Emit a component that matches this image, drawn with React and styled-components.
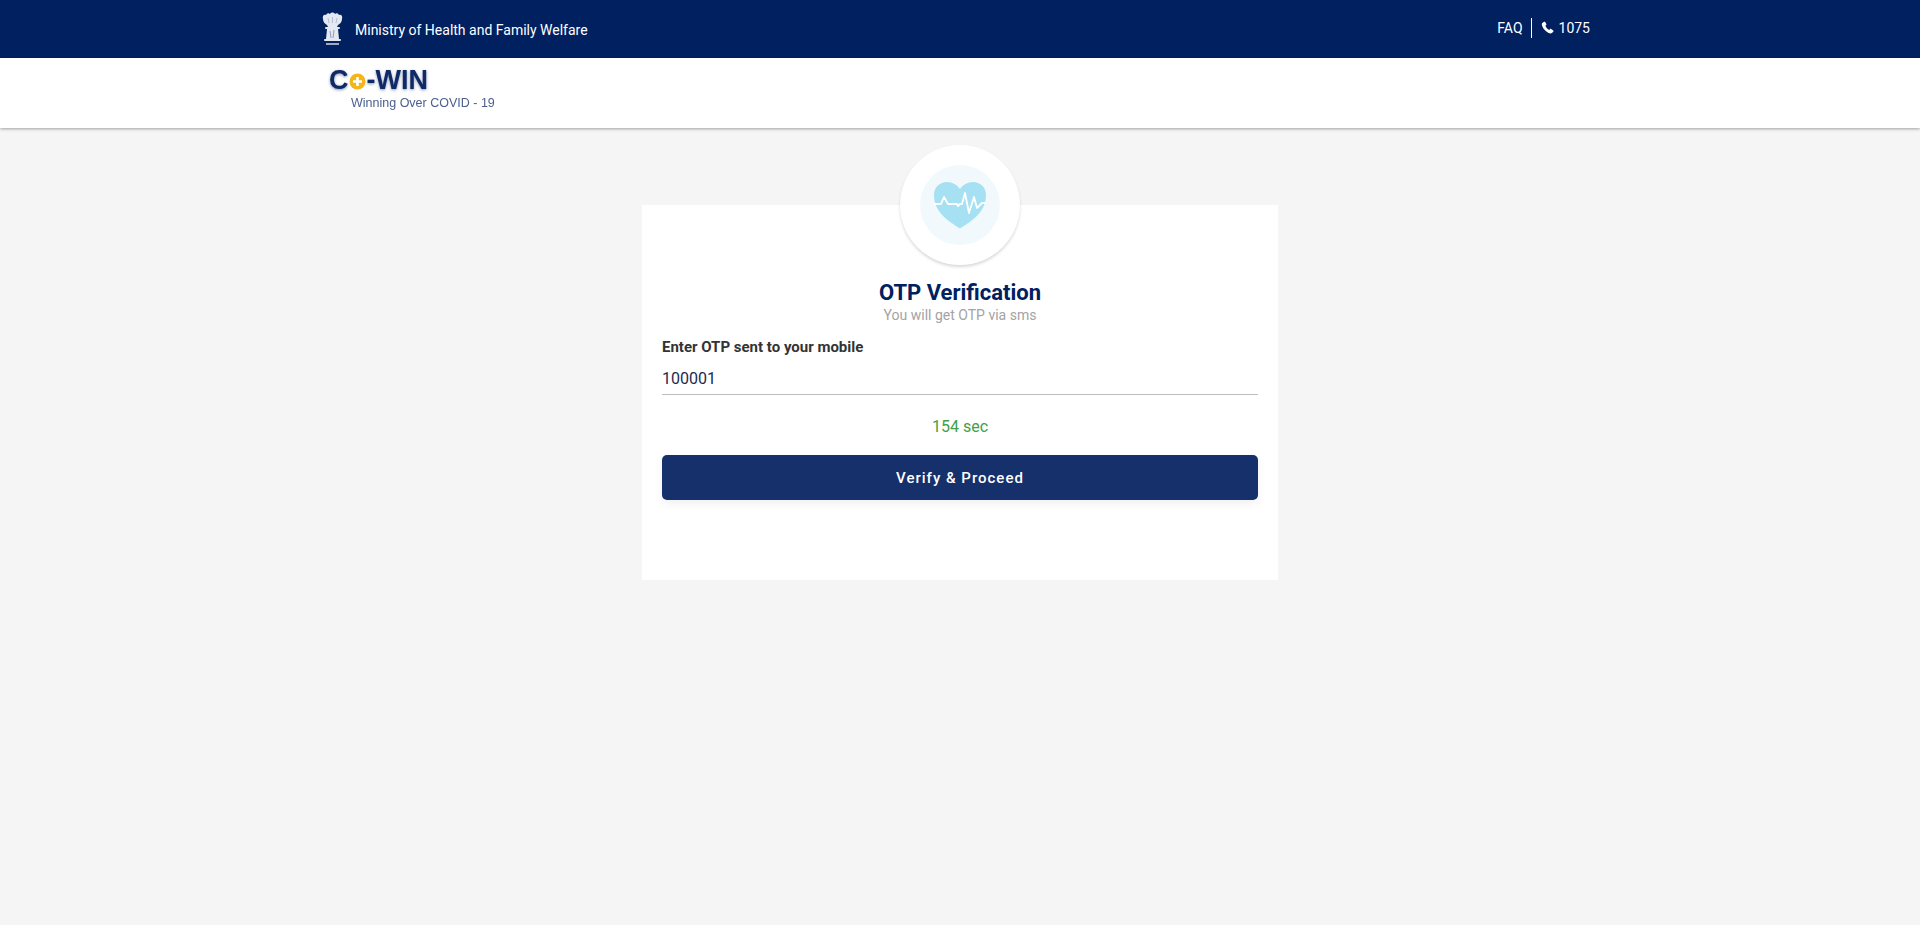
import React from 'react';
import styled, { createGlobalStyle } from 'styled-components';

const GlobalStyle = createGlobalStyle`
  html, body {
    margin: 0;
    padding: 0;
    min-height: 925px;
    background-color: #f5f5f5;
    font-family: Roboto, "Liberation Sans", sans-serif;
  }
  * { box-sizing: border-box; }
`;

const TopBar = styled.header`
  height: 58px;
  background-color: #002060;
  color: #fff;
`;

const Wrap = styled.div`
  width: 1280px;
  height: 100%;
  margin: 0 auto;
  display: flex;
  align-items: center;
  justify-content: space-between;
`;

const Ministry = styled.div`
  display: flex;
  align-items: center;
  gap: 11px;
  font-size: 14px;
  padding-top: 1px;
`;

const TopLinks = styled.div`
  display: flex;
  align-items: center;
  font-size: 14px;
  margin-top: -3px;
  padding-right: 10px;
`;

const Faq = styled.span`
  padding-right: 8px;
  border-right: 1px solid #fff;
  line-height: 20px;
`;

const Phone = styled.span`
  display: flex;
  align-items: center;
  gap: 5px;
  padding-left: 9px;
`;

const LogoBar = styled.div`
  height: 70px;
  background-color: #fff;
  box-shadow: 0 1px 3px rgba(0, 0, 0, 0.35);
`;

const Logo = styled.div`
  width: 1280px;
  margin: 0 auto;
  padding: 7px 0 0 9px;
  color: #0f2a66;
  filter: blur(0.4px);
`;

const LogoName = styled.div`
  display: flex;
  align-items: center;
  height: 30px;
  font-family: "Liberation Sans", sans-serif;
  font-size: 27px;
  font-weight: 700;
  text-shadow: 0 1px 3px rgba(15, 42, 102, 0.5);
`;

const LogoTag = styled.div`
  margin: 1px 0 0 22px;
  font-family: "Liberation Sans", sans-serif;
  font-size: 12.5px;
  line-height: 14px;
  color: #4a5f8f;
`;

const Main = styled.main`
  display: flex;
  justify-content: center;
  padding-top: 77px;
`;

const Card = styled.section`
  position: relative;
  width: 636px;
  height: 375px;
  padding: 74px 20px 0;
  background-color: #fff;
`;

const Badge = styled.div`
  position: absolute;
  top: -60px;
  left: 258px;
  width: 120px;
  height: 120px;
  border-radius: 50%;
  background-color: #fff;
  box-shadow: 0 2px 3px rgba(0, 0, 0, 0.15);
  display: flex;
  align-items: center;
  justify-content: center;
`;

const BadgeInner = styled.div`
  width: 80px;
  height: 80px;
  border-radius: 50%;
  background-color: #f1f9fd;
  display: flex;
  align-items: center;
  justify-content: center;
`;

const Title = styled.h1`
  margin: 0;
  font-size: 22px;
  line-height: 28px;
  font-weight: 700;
  text-align: center;
  color: #002060;
`;

const Subtitle = styled.p`
  margin: 0 0 14px;
  font-size: 14px;
  line-height: 16px;
  text-align: center;
  color: #a3a3a3;
`;

const Label = styled.label`
  display: block;
  font-size: 15px;
  line-height: 20px;
  font-weight: 700;
  color: #333;
`;

const OtpInput = styled.input`
  display: block;
  width: 100%;
  height: 32px;
  margin-top: 6px;
  padding: 0;
  border: 0;
  border-bottom: 1px solid #bdbdbd;
  outline: 0;
  background: transparent;
  font-family: inherit;
  font-size: 16px;
  color: #1d2b50;
`;

const Timer = styled.div`
  margin-top: 22px;
  font-size: 16px;
  line-height: 20px;
  text-align: center;
  color: #43a047;
`;

const Button = styled.button`
  display: block;
  width: 100%;
  height: 45px;
  margin-top: 18px;
  border: 0;
  border-radius: 5px;
  background-color: #15306b;
  box-shadow: 0 4px 10px rgba(0, 0, 0, 0.06);
  color: #fff;
  font-family: inherit;
  font-size: 15px;
  font-weight: 500;
  letter-spacing: 1px;
`;

const EmblemSvg = styled.svg`
  filter: blur(0.5px);
  margin-left: 1px;
`;

const Emblem = () => (
  <EmblemSvg width="23" height="35" viewBox="0 0 23 35">
    <g fill="#e4e8f1">
      <path d="M2 7 C1 4 3 2 5 3 C6 1 8 1 9 2 C10 0 13 0 14 2 C15 1 17 1 18 3 C20 2 22 4 21 7 C21 10 19 12 17 13 L16 15 L7 15 L6 13 C4 12 2 10 2 7Z" />
      <rect x="4" y="15" width="15" height="2" rx="1" />
      <path d="M6 17 L17 17 L18 27 L5 27Z" />
      <rect x="3" y="27" width="17" height="2" rx="1" />
    </g>
    <rect x="5" y="31" width="13" height="2" fill="#9fabc6" />
    <path d="M9 19 L10 26 M13 18 L12 26" stroke="#8f9cbb" strokeWidth="1" />
    <path d="M7 6 L8 11 M11.5 5 L11.5 11 M16 6 L15 11" stroke="#b3bdd3" strokeWidth="1" />
  </EmblemSvg>
);

const PhoneIcon = () => (
  <svg width="13" height="13" viewBox="0 0 13 13">
    <path
      d="M3.1 0.8 L1.3 2 C0.6 2.6 0.7 4 1.5 5.8 C2.7 8.4 4.9 10.7 7.6 12 C9 12.6 10.3 12.7 11 12 L12.4 10.5 C12.7 10.1 12.6 9.7 12.2 9.4 L10.2 8 C9.8 7.7 9.4 7.8 9.1 8.1 L8.2 9 C6.6 8.2 5 6.4 4.4 4.8 L5.2 4 C5.5 3.7 5.5 3.3 5.3 2.9 L4.2 1 C3.9 0.6 3.5 0.5 3.1 0.8Z"
      fill="#fff"
    />
  </svg>
);

const DotSvg = styled.svg`
  margin: 3px 1px 0 0;
`;

const PlusDot = () => (
  <DotSvg width="17" height="17" viewBox="0 0 17 17">
    <circle cx="8.5" cy="8.5" r="8" fill="#f2b51d" />
    <path d="M8.5 4 V13 M4 8.5 H13" stroke="#fff" strokeWidth="2.6" />
  </DotSvg>
);

const Heart = () => (
  <svg width="54" height="48" viewBox="0 0 54 48">
    <path
      d="M27 47.5 C17 41 1 32 1 14 C1 6 7 1 14 1 C20 1 24 4 27 8 C30 4 34 1 40 1 C47 1 53 6 53 14 C53 32 37 41 27 47.5Z"
      fill="#a6e0f3"
    />
    <path
      d="M1 23 H8 L11 16 L15 23 H24 L25 25 L27 23 L29 23 L32 12 L36 32 L41 16 L44 27 L49 22 H53"
      fill="none"
      stroke="#fff"
      strokeWidth="1.8"
      strokeLinejoin="round"
    />
  </svg>
);

const App = () => {
  return (
    <>
      <GlobalStyle />
      <TopBar>
        <Wrap>
          <Ministry>
            <Emblem />
            Ministry of Health and Family Welfare
          </Ministry>
          <TopLinks>
            <Faq>FAQ</Faq>
            <Phone>
              <PhoneIcon />
              1075
            </Phone>
          </TopLinks>
        </Wrap>
      </TopBar>
      <LogoBar>
        <Logo>
          <LogoName>
            C<PlusDot />-WIN
          </LogoName>
          <LogoTag>Winning Over COVID - 19</LogoTag>
        </Logo>
      </LogoBar>
      <Main>
        <Card>
          <Badge>
            <BadgeInner>
              <Heart />
            </BadgeInner>
          </Badge>
          <Title>OTP Verification</Title>
          <Subtitle>You will get OTP via sms</Subtitle>
          <Label htmlFor="otp">Enter OTP sent to your mobile</Label>
          <OtpInput id="otp" defaultValue="100001" />
          <Timer>154 sec</Timer>
          <Button>Verify &amp; Proceed</Button>
        </Card>
      </Main>
    </>
  );
};

export default App;
